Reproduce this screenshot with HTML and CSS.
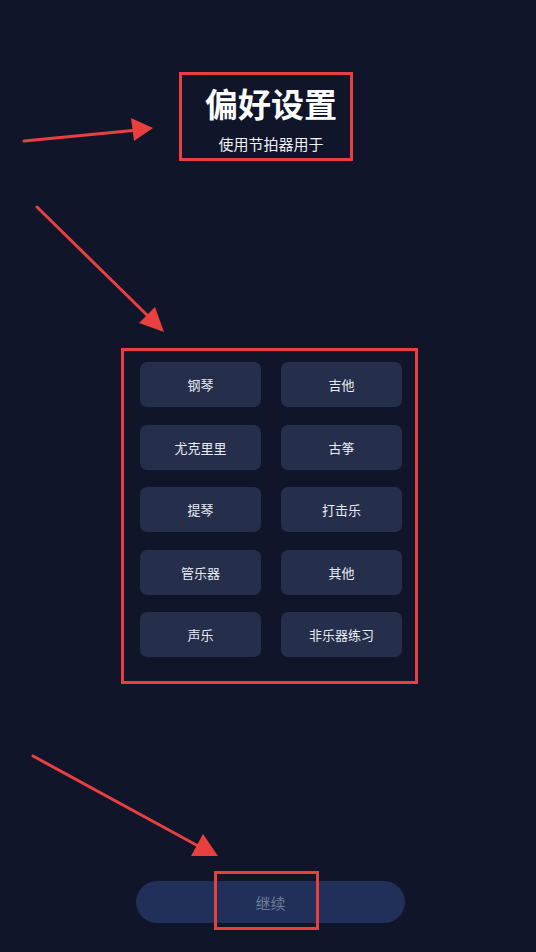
FILE: index.html
```html
<!DOCTYPE html>
<html lang="zh-CN">
<head>
    <meta charset="UTF-8">
    <meta name="viewport" content="width=device-width, initial-scale=1.0">
    <title>偏好设置</title>
    <link rel="stylesheet" href="styles.css">
</head>
<body>

    <div class="page">

        <!-- 标题 -->
        <div class="mark title-box">
            <h1>偏好设置</h1>
            <p>使用节拍器用于</p>
        </div>

        <!-- 乐器选项 -->
        <div class="mark choice-box">
            <div class="choices">
                <button class="choice">钢琴</button>
                <button class="choice">吉他</button>
                <button class="choice">尤克里里</button>
                <button class="choice">古筝</button>
                <button class="choice">提琴</button>
                <button class="choice">打击乐</button>
                <button class="choice">管乐器</button>
                <button class="choice">其他</button>
                <button class="choice">声乐</button>
                <button class="choice">非乐器练习</button>
            </div>
        </div>

        <!-- 继续按钮 -->
        <div class="next-wrap">
            <button class="next">继续</button>
            <span class="next-mark"></span>
        </div>

        <!-- 标注箭头 -->
        <svg class="arrows" width="536" height="952" viewBox="0 0 536 952">
            <g stroke="#e8403f" stroke-width="3" stroke-linecap="round">
                <line x1="24" y1="141" x2="138" y2="130"/>
                <line x1="37" y1="207" x2="150" y2="318"/>
                <line x1="33" y1="756" x2="200" y2="847"/>
            </g>
            <g fill="#e8403f">
                <polygon points="153,128 131,118 134,141"/>
                <polygon points="164,332 139,323 155,307"/>
                <polygon points="218,856 191,856 203,834"/>
            </g>
        </svg>
    </div>

</body>
</html>
```

FILE: styles.css
```css
/* 页面 */
body {
    margin: 0;
    background-color: #10152a;
    font-family: "Noto Sans CJK SC", "Noto Sans", sans-serif;
    color: #fff;
}

.page {
    position: relative;
    width: 536px;
    height: 952px;
    box-sizing: border-box;
    padding-top: 72px;
    display: flex;
    flex-direction: column;
    align-items: flex-start;
    overflow: hidden;
}

/* 红色标注框 */
.mark {
    border: 3px solid #e8403f;
    box-sizing: border-box;
}

/* 标题 */
.title-box {
    width: 174px;
    height: 89px;
    margin-left: 179px;
    padding: 12px 0 0 10px;
    text-align: center;
}

.title-box h1 {
    margin: 0;
    font-size: 33px;
    line-height: 33px;
    font-weight: bold;
}

.title-box p {
    margin: 16px 0 0;
    font-size: 15px;
    line-height: 15px;
    color: #eef0f5;
}

/* 乐器选项 */
.choice-box {
    width: 297px;
    height: 336px;
    margin-top: 187px;
    margin-left: 121px;
    padding: 11px 0 0 16px;
}

.choices {
    display: grid;
    grid-template-columns: 121px 121px;
    grid-auto-rows: 45px;
    column-gap: 20px;
    row-gap: 17.5px;
}

.choice {
    border: none;
    border-radius: 7px;
    background-color: #252e4b;
    color: #e9ecf2;
    font-family: inherit;
    font-size: 13px;
    padding: 0;
    cursor: pointer;
}

/* 继续按钮 */
.next-wrap {
    position: relative;
    margin-top: 197px;
    margin-left: 136px;
}

.next {
    display: block;
    width: 269px;
    height: 42px;
    border: none;
    border-radius: 21px;
    background-color: #20305a;
    color: #6f7b97;
    font-family: inherit;
    font-size: 15px;
    padding: 0;
}

.next-mark {
    position: absolute;
    left: 78px;
    top: -10px;
    width: 105px;
    height: 59px;
    border: 3px solid #e8403f;
    box-sizing: border-box;
}

/* 标注箭头 */
.arrows {
    position: absolute;
    left: 0;
    top: 0;
    pointer-events: none;
}
```
